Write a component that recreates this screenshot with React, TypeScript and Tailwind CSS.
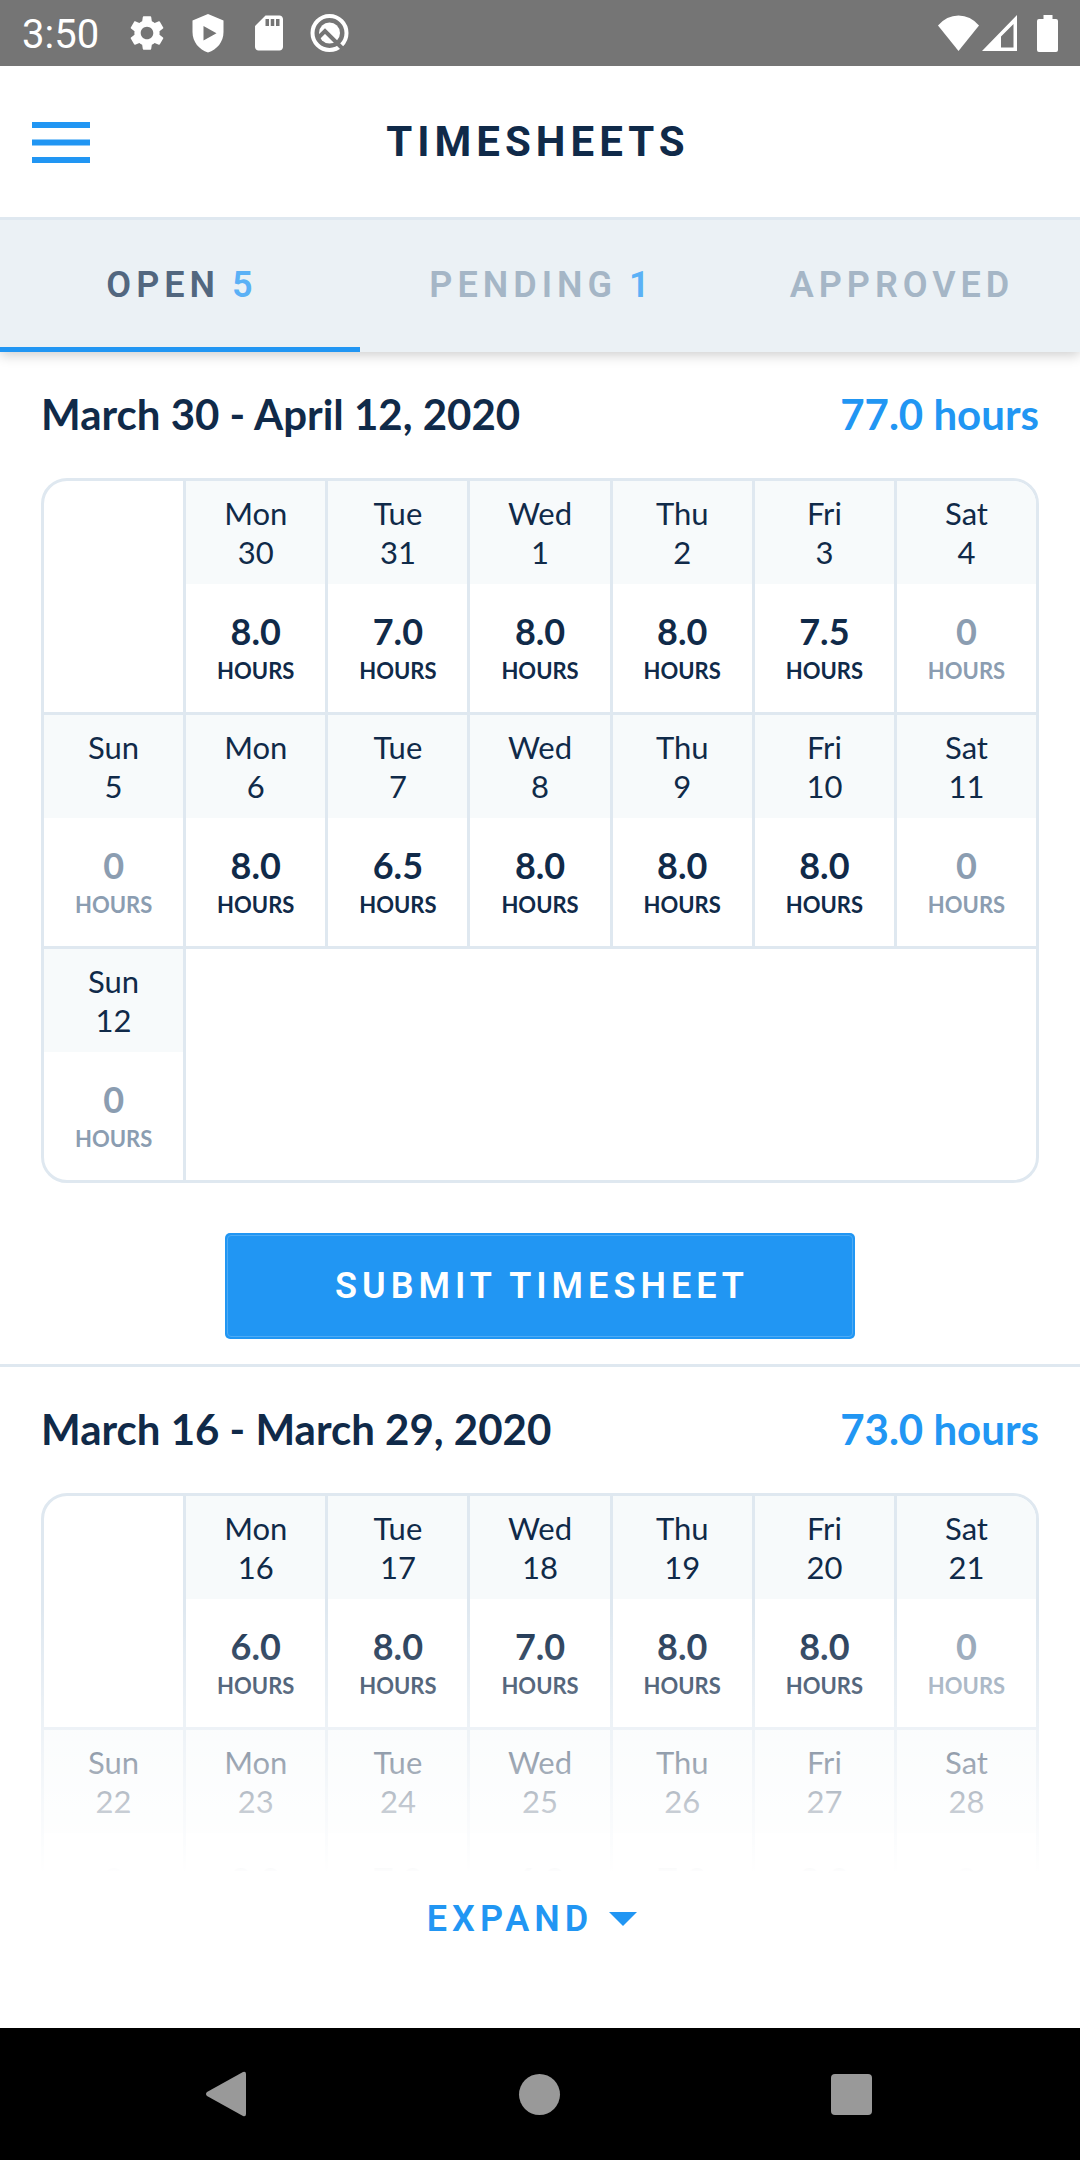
import React, { useState } from 'react';
import { MdSettings, MdSdStorage } from 'react-icons/md';

interface DayEntry {
  day: string;
  date: number;
  hours: string;
}

interface Timesheet {
  title: string;
  total: string;
  // null is a blank cell before the period starts
  weeks: (DayEntry | null)[][];
}

const DAYS = ['Sun', 'Mon', 'Tue', 'Wed', 'Thu', 'Fri', 'Sat'];

const week = (dates: number[], hours: string[], offset = 0): (DayEntry | null)[] => [
  ...Array<null>(offset).fill(null),
  ...dates.map((date, i) => ({ day: DAYS[i + offset], date, hours: hours[i] })),
];

const current: Timesheet = {
  title: 'March 30 - April 12, 2020',
  total: '77.0 hours',
  weeks: [
    week([30, 31, 1, 2, 3, 4], ['8.0', '7.0', '8.0', '8.0', '7.5', '0'], 1),
    week([5, 6, 7, 8, 9, 10, 11], ['0', '8.0', '6.5', '8.0', '8.0', '8.0', '0']),
    week([12], ['0']),
  ],
};

const previous: Timesheet = {
  title: 'March 16 - March 29, 2020',
  total: '73.0 hours',
  weeks: [
    week([16, 17, 18, 19, 20, 21], ['6.0', '8.0', '7.0', '8.0', '8.0', '0'], 1),
    week([22, 23, 24, 25, 26, 27, 28], ['0', '8.0', '7.0', '6.0', '7.0', '8.0', '0']),
  ],
};

const StatusBar = () => (
  <div className="flex h-[66px] items-center justify-between bg-[#757575] px-[22px] text-white">
    <div className="flex items-center gap-[19px]">
      <span className="mr-2 pt-1 font-['Roboto',sans-serif] text-[40px] leading-[48px]">3:50</span>
      <MdSettings className="size-[42px]" />
      <svg className="size-[42px]" viewBox="0 0 42 42" fill="currentColor">
        <path
          fillRule="evenodd"
          d="M21 2 L36.500 8.500 V20 C36.500 30 30 37.500 21 40.500 C12 37.500 5.500 30 5.500 20 V8.500 Z M16.500 14 V28.500 L29.500 21.200 Z"
        />
      </svg>
      <MdSdStorage className="size-[42px]" />
      <svg className="size-[42px]" viewBox="0 0 42 42" fill="none">
        <circle cx="20.500" cy="21" r="17" stroke="currentColor" strokeWidth="4" />
        <circle cx="20.500" cy="21" r="10.500" fill="currentColor" />
        <path d="M8.500 26.500 L16 19 L34 37" stroke="#757575" strokeWidth="4" />
      </svg>
    </div>
    <div className="flex items-center">
      <svg className="h-[36px] w-[41px]" viewBox="0 0 41 36" fill="currentColor">
        <path d="M0 10.500 Q8.500 0.500 20.500 0.500 Q32.500 0.500 41 10.500 L20.500 36 Z" />
      </svg>
      <svg className="mr-5 ml-[3px] h-[36px] w-[35px]" viewBox="0 0 35 36" fill="currentColor">
        <path fillRule="evenodd" d="M35 0 V36 H0 Z M31.500 9 L19 21.500 V32.500 H31.500 Z" />
      </svg>
      <svg className="h-[37px] w-[21px]" viewBox="0 0 21 37" fill="currentColor">
        <path d="M6.500 0 H15.500 V4 H19 Q21 4 21 6 V35 Q21 37 19 37 H2 Q0 37 0 35 V6 Q0 4 2 4 H6.500 Z" />
      </svg>
    </div>
  </div>
);

const Header = () => (
  <header className="relative z-20 grid grid-cols-[1fr_auto_1fr] items-center border-b-3 border-[#dfe8f0] bg-white px-8 py-[50px]">
    <button aria-label="Menu" className="w-fit pt-0.5 text-[#2196f3]">
      <svg className="h-[41px] w-[58px]" viewBox="0 0 58 41" fill="currentColor">
        <rect width="58" height="6" />
        <rect y="17.500" width="58" height="6" />
        <rect y="35" width="58" height="6" />
      </svg>
    </button>
    <h1 className="pr-1 font-['Roboto',sans-serif] text-[42px] leading-[51px] font-bold tracking-[5px] text-[#102a49]">
      TIMESHEETS
    </h1>
  </header>
);

const TABS = [
  { label: 'OPEN', count: 5 },
  { label: 'PENDING', count: 1 },
  { label: 'APPROVED', count: 0 },
];

const Tabs = () => {
  const [active, setActive] = useState('OPEN');

  return (
    <nav className="relative z-10 flex bg-[#ebf1f5] shadow-[0_3px_12px_rgba(0,0,0,0.2)]">
      {TABS.map(({ label, count }) => (
        <button
          key={label}
          onClick={() => setActive(label)}
          className={`flex flex-1 basis-0 items-center justify-center gap-3 border-b-5 pt-[42px] pb-[38px] pl-1 font-['Roboto',sans-serif] text-[36px] leading-[47px] font-semibold tracking-[5px] ${
            active === label
              ? 'border-[#2196f3] text-[#52677f]'
              : 'border-transparent text-[#a5b6c6]'
          }`}
        >
          {label}
          {count > 0 && <span className="text-[#5bb1f6]">{count}</span>}
        </button>
      ))}
    </nav>
  );
};

const DayCell: React.FC<{ entry: DayEntry; caption: boolean }> = ({ entry, caption }) => (
  <>
    <div className="bg-[#f7fafb] pt-[13px] pb-3 text-[31px] leading-[39px]">
      <div>{entry.day}</div>
      <div>{entry.date}</div>
    </div>
    <div className={`pt-[25px] pb-[23px] font-bold ${entry.hours === '0' ? 'text-[#8b9db1]' : ''}`}>
      <div className="text-[36px] leading-[44px]">{entry.hours}</div>
      {caption && <div className="text-[22px] leading-[36px]">HOURS</div>}
    </div>
  </>
);

const HoursTable: React.FC<{ weeks: Timesheet['weeks']; collapsed?: boolean }> = ({ weeks, collapsed = false }) => (
  <div className="overflow-hidden rounded-[26px] border-3 border-[#dfe8f0]">
    <table className="w-full table-fixed border-separate border-spacing-0 text-center text-[#102a49]">
      <colgroup>
        <col span={6} />
        <col className="w-[139px]" />
      </colgroup>
      <tbody>
        {weeks.map((entries, row) => {
          const last = row === weeks.length - 1;
          return (
            <tr key={row}>
              {entries.map((entry, col) => (
                <td
                  key={col}
                  className={`border-[#dfe8f0] p-0 align-top ${last ? '' : 'border-b-3'} ${col < 6 ? 'border-r-3' : ''}`}
                >
                  {entry && <DayCell entry={entry} caption={!(collapsed && last)} />}
                </td>
              ))}
              {entries.length < 7 && <td colSpan={7 - entries.length} />}
            </tr>
          );
        })}
      </tbody>
    </table>
  </div>
);

const SheetTitle: React.FC<{ title: string; total: string }> = ({ title, total }) => (
  <div className="flex items-center justify-between pt-[37px] pb-[39px] text-[42px] leading-[50px] font-bold">
    <h2 className="text-[#102a49]">{title}</h2>
    <span className="text-[#2196f3]">{total}</span>
  </div>
);

const NavBar = () => (
  <div className="grid h-[132px] grid-cols-3 bg-black px-[73px] text-[#999999]">
    <button aria-label="Back" className="flex items-center justify-center">
      <svg className="size-[46px]" viewBox="0 0 46 46" fill="currentColor">
        <path d="M1 21 L37 1 Q40 0 40 3 V43 Q40 46 37 45 L1 25 Q-1 23 1 21 Z" />
      </svg>
    </button>
    <button aria-label="Home" className="flex items-center justify-center">
      <span className="size-[41px] rounded-full bg-current" />
    </button>
    <button aria-label="Recent apps" className="flex items-center justify-center">
      <span className="size-[41px] rounded-[4px] bg-current" />
    </button>
  </div>
);

const App = () => {
  const [expanded, setExpanded] = useState(false);

  return (
    <div className="flex min-h-screen flex-col bg-white font-['Lato',sans-serif]">
      <StatusBar />
      <Header />
      <Tabs />

      <main className="flex-1">
        <section className="border-b-3 border-[#dfe8f0] px-[41px] pb-[25px]">
          <SheetTitle title={current.title} total={current.total} />
          <HoursTable weeks={current.weeks} />
          <div className="mt-[50px] flex justify-center">
            <button className="w-[630px] max-w-full rounded-[5px] bg-[#2196f3] p-0.5 font-['Roboto',sans-serif] text-[36px] leading-[48px] font-semibold tracking-[5px] text-white">
              <span className="block rounded-[4px] border border-[#4dabf5] py-[26px] pl-1">
                SUBMIT TIMESHEET
              </span>
            </button>
          </div>
        </section>

        <section className="px-[41px]">
          <SheetTitle title={previous.title} total={previous.total} />
          {/* collapsed preview, fades out towards the expand button */}
          <div className={`relative ${expanded ? '' : 'h-[378px] overflow-hidden'}`}>
            <HoursTable weeks={previous.weeks} collapsed={!expanded} />
            {!expanded && (
              <div className="absolute inset-x-0 bottom-0 h-[263px] bg-linear-to-b from-white/0 to-white/99" />
            )}
          </div>
          <div className="flex justify-center">
            <button
              onClick={() => setExpanded(!expanded)}
              className="flex items-center gap-4 py-6 pr-4 font-['Roboto',sans-serif] text-[36px] leading-[48px] font-semibold tracking-[5px] text-[#2196f3]"
            >
              EXPAND
              <svg className="h-[14px] w-[28px]" viewBox="0 0 28 14" fill="currentColor">
                <path d="M0 0 H28 L14 14 Z" />
              </svg>
            </button>
          </div>
        </section>
      </main>

      <NavBar />
    </div>
  );
};

export default App;
